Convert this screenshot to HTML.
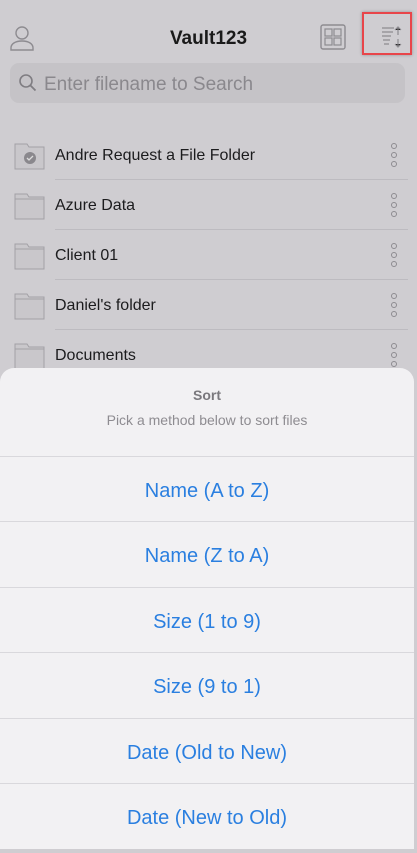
<html><head><style>
body{margin:0;width:417px;height:849px;background:#cfcdd1;font-family:"Liberation Sans",sans-serif;position:relative;overflow:hidden}
.abs{position:absolute}
.row{position:absolute;left:0;width:417px;height:50px}
.row .t{position:absolute;left:55px;top:17px;font-size:16px;color:#1c1c1e}
.row .sep{position:absolute;left:55px;right:9px;bottom:0;height:1px;background:#bdbbc0}
.dots{position:absolute;left:391px;top:13px;width:6px}
.dots i{display:block;width:4px;height:4px;border:1px solid #8d8b90;border-radius:50%;margin-bottom:3px}
.sheet{position:absolute;left:0;top:368px;width:414px;height:481px;background:#f2f1f3;border-radius:14px 14px 0 0}
.opt{position:absolute;left:0;width:414px;height:65px;border-top:1px solid #d9d8dc;text-align:center;line-height:69px;font-size:20px;color:#2a7fe0}
</style></head><body>
<svg class="abs" style="left:10px;top:24px" width="26" height="28" viewBox="0 0 26 28"><circle cx="12" cy="9" r="6" fill="none" stroke="#8d8b90" stroke-width="1.4"/><path d="M1 26v-2c0-4 4-7 11-7s11 3 11 7v2z" fill="none" stroke="#8d8b90" stroke-width="1.4"/></svg>
<div class="abs" style="left:0;width:417px;top:28px;text-align:center;font-size:19px;font-weight:bold;color:#1a1a1a">Vault123</div>
<svg class="abs" style="left:320px;top:24px" width="26" height="26" viewBox="0 0 26 26"><rect x="1" y="1" width="24" height="24" rx="2" fill="none" stroke="#8d8b90" stroke-width="1.4"/><rect x="5" y="5" width="7" height="7" fill="none" stroke="#8d8b90" stroke-width="1.2"/><rect x="14" y="5" width="7" height="7" fill="none" stroke="#8d8b90" stroke-width="1.2"/><rect x="5" y="14" width="7" height="7" fill="none" stroke="#8d8b90" stroke-width="1.2"/><rect x="14" y="14" width="7" height="7" fill="none" stroke="#8d8b90" stroke-width="1.2"/></svg>
<div class="abs" style="left:362px;top:12px;width:50px;height:43px;border:2px solid #e8454a;box-sizing:border-box;box-shadow:0 0 3px rgba(0,0,0,.3)"></div>
<svg class="abs" style="left:380px;top:26px" width="24" height="22" viewBox="0 0 24 22"><g stroke="#8d8b90" stroke-width="1.2"><path d="M2 2h12M2 6h11M2 10h9M3 14h7M4 18h5"/><path d="M18 1v8M15 4l3-3 3 3M18 13v8M15 18l3 3 3-3"/></g></svg>
<div class="abs" style="left:10px;top:63px;width:395px;height:40px;background:#c5c3c7;border-radius:9px"></div>
<svg class="abs" style="left:18px;top:73px" width="20" height="20" viewBox="0 0 20 20"><circle cx="8" cy="8" r="6" fill="none" stroke="#7f7d82" stroke-width="1.6"/><path d="M12.5 12.5l5 5" stroke="#7f7d82" stroke-width="1.8"/></svg>
<div class="abs" style="left:44px;top:74px;font-size:19px;color:#8a888d">Enter filename to Search</div>
<div class="row" style="top:130px"><svg class="abs" style="left:14px;top:10px" width="31" height="30" viewBox="0 0 31 30"><path d="M1 4h12l2 3h15v22H1z" fill="#c9c7cb" stroke="#a3a1a6"/><circle cx="16" cy="18" r="6" fill="#8a888d"/><path d="M13 18l2 2 4-4" stroke="#ddd" fill="none" stroke-width="1.3"/></svg><div class="t">Andre Request a File Folder</div><div class="dots"><i></i><i></i><i></i></div><div class="sep"></div></div>
<div class="row" style="top:180px"><svg class="abs" style="left:14px;top:10px" width="31" height="30" viewBox="0 0 31 30"><path d="M1 4h12l2 3h15v22H1z" fill="#c9c7cb" stroke="#a3a1a6"/><path d="M1 9h29" stroke="#a3a1a6"/></svg><div class="t">Azure Data</div><div class="dots"><i></i><i></i><i></i></div><div class="sep"></div></div>
<div class="row" style="top:230px"><svg class="abs" style="left:14px;top:10px" width="31" height="30" viewBox="0 0 31 30"><path d="M1 4h12l2 3h15v22H1z" fill="#c9c7cb" stroke="#a3a1a6"/><path d="M1 9h29" stroke="#a3a1a6"/></svg><div class="t">Client 01</div><div class="dots"><i></i><i></i><i></i></div><div class="sep"></div></div>
<div class="row" style="top:280px"><svg class="abs" style="left:14px;top:10px" width="31" height="30" viewBox="0 0 31 30"><path d="M1 4h12l2 3h15v22H1z" fill="#c9c7cb" stroke="#a3a1a6"/><path d="M1 9h29" stroke="#a3a1a6"/></svg><div class="t">Daniel's folder</div><div class="dots"><i></i><i></i><i></i></div><div class="sep"></div></div>
<div class="row" style="top:330px"><svg class="abs" style="left:14px;top:10px" width="31" height="30" viewBox="0 0 31 30"><path d="M1 4h12l2 3h15v22H1z" fill="#c9c7cb" stroke="#a3a1a6"/><path d="M1 9h29" stroke="#a3a1a6"/></svg><div class="t">Documents</div><div class="dots"><i></i><i></i><i></i></div></div>
<div class="sheet">
<div class="abs" style="left:0;width:414px;top:19px;text-align:center;font-size:14px;font-weight:bold;color:#7a787d">Sort</div>
<div class="abs" style="left:0;width:414px;top:44px;text-align:center;font-size:14px;color:#8e8c91">Pick a method below to sort files</div>
<div class="opt" style="top:88px">Name (A to Z)</div>
<div class="opt" style="top:153px">Name (Z to A)</div>
<div class="opt" style="top:219px">Size (1 to 9)</div>
<div class="opt" style="top:284px">Size (9 to 1)</div>
<div class="opt" style="top:350px">Date (Old to New)</div>
<div class="opt" style="top:415px">Date (New to Old)</div>
</div>
</body></html>
